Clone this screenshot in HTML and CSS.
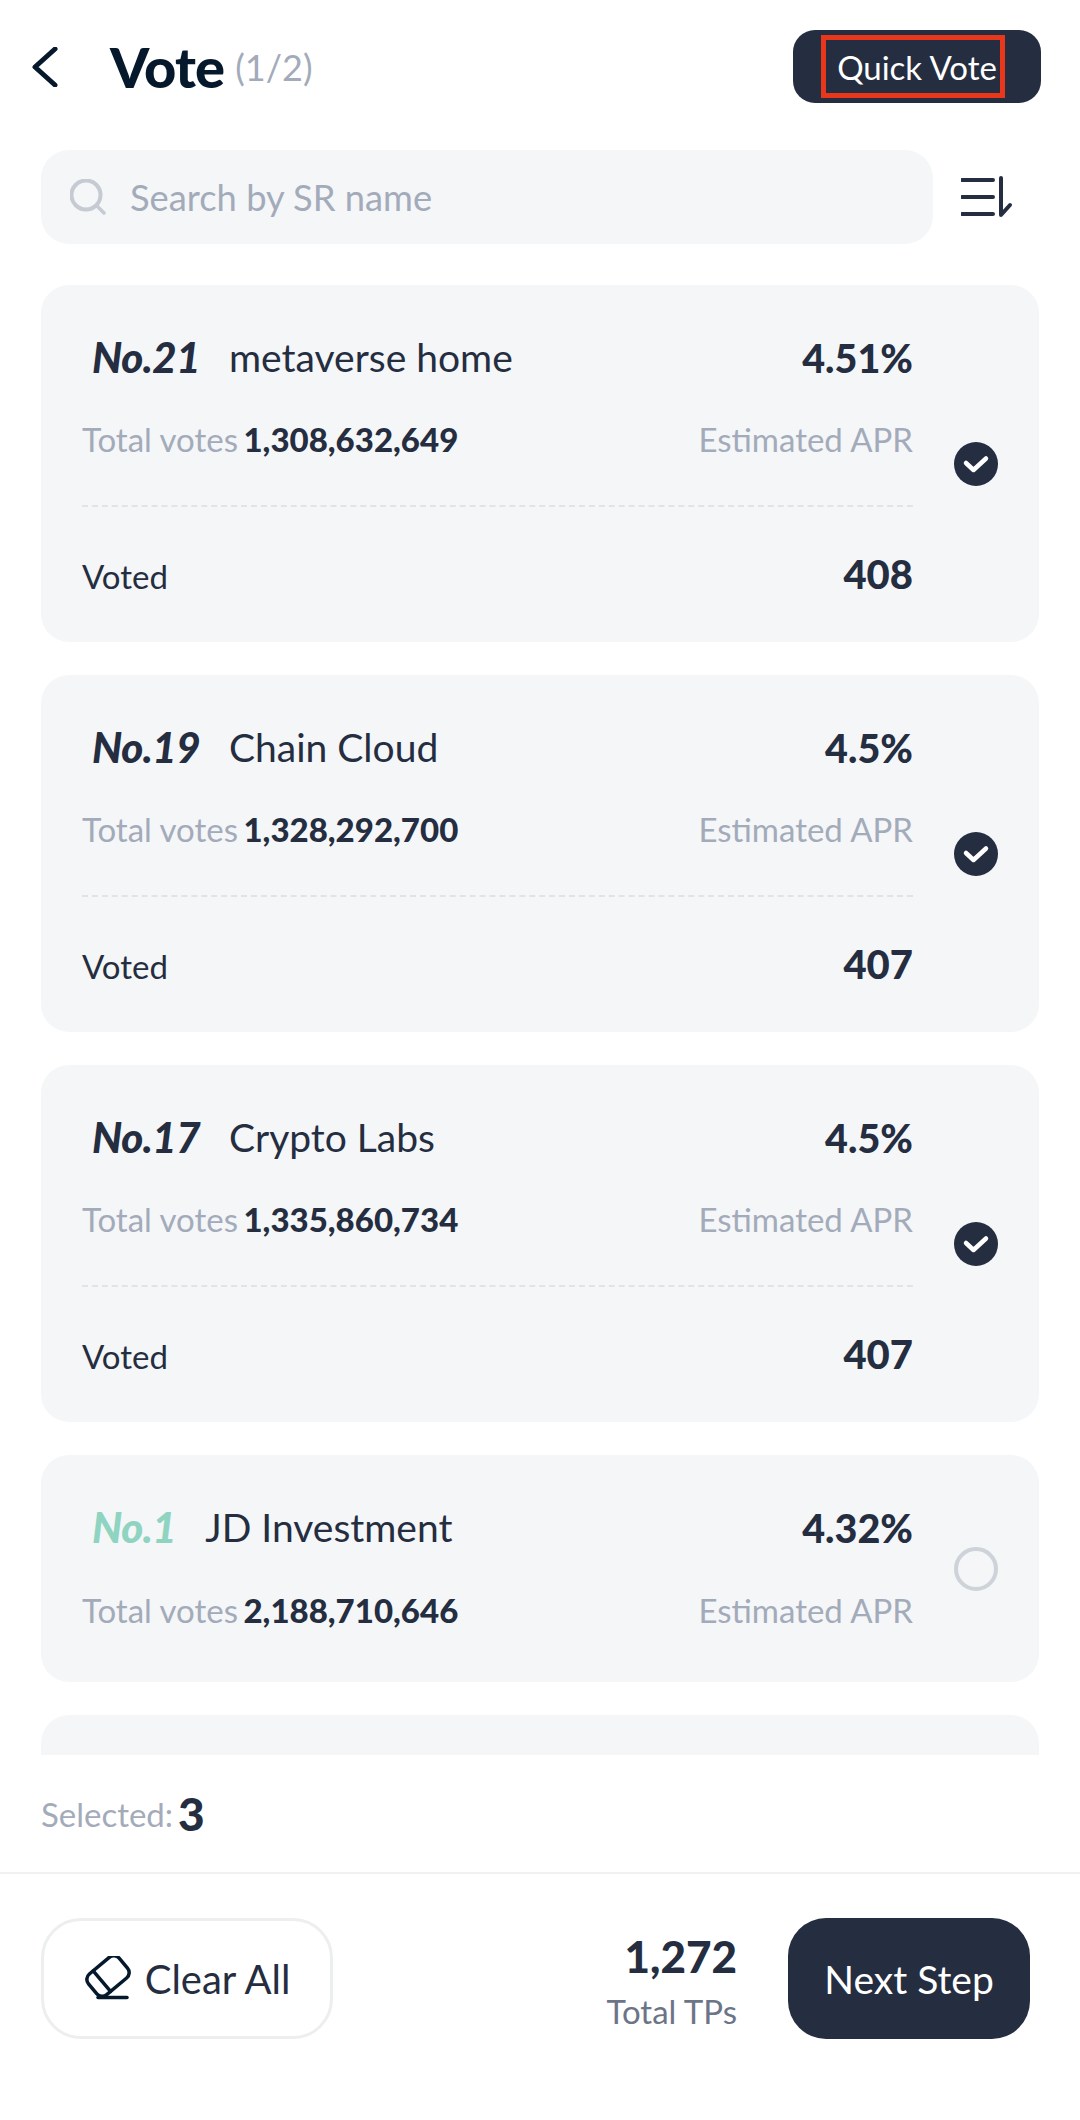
FILE: index.html
```html
<!DOCTYPE html>
<html lang="en">

<head>
    <meta charset="UTF-8">
    <meta name="viewport" content="width=device-width, initial-scale=1.0">
    <title>Vote</title>
    <link rel="stylesheet" href="styles.css">
</head>

<body>
    <div class="page">
        <header class="top-bar">
            <button class="back-btn">
                <svg width="28" height="40" viewBox="0 0 28 40" fill="none">
                    <path d="M25 2 L5 20 L25 38" stroke="#06182c" stroke-width="5" stroke-linecap="round" stroke-linejoin="round"/>
                </svg>
            </button>
            <h1 class="title">Vote</h1>
            <span class="step">(1/2)</span>
            <button class="quick-btn"><span class="quick-label">Quick Vote</span></button>
        </header>

        <div class="search-row">
            <div class="search-box">
                <svg width="36" height="36" viewBox="0 0 36 36" fill="none">
                    <circle cx="16" cy="16" r="14.5" stroke="#c6cbd3" stroke-width="4"/>
                    <path d="M27 27 L34 34" stroke="#c6cbd3" stroke-width="3.5" stroke-linecap="round"/>
                </svg>
                <span class="placeholder">Search by SR name</span>
            </div>
            <button class="sort-btn">
                <svg width="52" height="42" viewBox="0 0 52 42" fill="none">
                    <path d="M1 4 H32 M1 21 H32 M1 38 H32" stroke="#252d40" stroke-width="4" stroke-linecap="round"/>
                    <path d="M40 2 V39 L49 29" stroke="#252d40" stroke-width="4" stroke-linecap="round" stroke-linejoin="round"/>
                </svg>
            </button>
        </div>

        <div class="list">
            <div class="card">
                <div class="card-body">
                    <div class="row name-row">
                        <div class="sr"><span class="rank">No.21</span><span class="sr-name">metaverse home</span></div>
                        <span class="apr">4.51%</span>
                    </div>
                    <div class="row votes-row">
                        <div class="muted">Total votes <b class="votes">1,308,632,649</b></div>
                        <span class="muted">Estimated APR</span>
                    </div>
                    <div class="row voted-row">
                        <span class="voted-label">Voted</span>
                        <span class="voted-num">408</span>
                    </div>
                </div>
                <span class="check on">
                    <svg width="44" height="44" viewBox="0 0 44 44" fill="none"><path d="M12 21 L19.5 28 L32 16.5" stroke="#fff" stroke-width="4.5" stroke-linecap="round" stroke-linejoin="round"/></svg>
                </span>
            </div>

            <div class="card">
                <div class="card-body">
                    <div class="row name-row">
                        <div class="sr"><span class="rank">No.19</span><span class="sr-name">Chain Cloud</span></div>
                        <span class="apr">4.5%</span>
                    </div>
                    <div class="row votes-row">
                        <div class="muted">Total votes <b class="votes">1,328,292,700</b></div>
                        <span class="muted">Estimated APR</span>
                    </div>
                    <div class="row voted-row">
                        <span class="voted-label">Voted</span>
                        <span class="voted-num">407</span>
                    </div>
                </div>
                <span class="check on">
                    <svg width="44" height="44" viewBox="0 0 44 44" fill="none"><path d="M12 21 L19.5 28 L32 16.5" stroke="#fff" stroke-width="4.5" stroke-linecap="round" stroke-linejoin="round"/></svg>
                </span>
            </div>

            <div class="card">
                <div class="card-body">
                    <div class="row name-row">
                        <div class="sr"><span class="rank">No.17</span><span class="sr-name">Crypto Labs</span></div>
                        <span class="apr">4.5%</span>
                    </div>
                    <div class="row votes-row">
                        <div class="muted">Total votes <b class="votes">1,335,860,734</b></div>
                        <span class="muted">Estimated APR</span>
                    </div>
                    <div class="row voted-row">
                        <span class="voted-label">Voted</span>
                        <span class="voted-num">407</span>
                    </div>
                </div>
                <span class="check on">
                    <svg width="44" height="44" viewBox="0 0 44 44" fill="none"><path d="M12 21 L19.5 28 L32 16.5" stroke="#fff" stroke-width="4.5" stroke-linecap="round" stroke-linejoin="round"/></svg>
                </span>
            </div>

            <div class="card short">
                <div class="card-body">
                    <div class="row name-row">
                        <div class="sr"><span class="rank top">No.1</span><span class="sr-name">JD Investment</span></div>
                        <span class="apr">4.32%</span>
                    </div>
                    <div class="row votes-row last">
                        <div class="muted">Total votes <b class="votes">2,188,710,646</b></div>
                        <span class="muted">Estimated APR</span>
                    </div>
                </div>
                <span class="check"></span>
            </div>

            <div class="card peek"></div>
        </div>

        <div class="selected">
            <span class="selected-label">Selected:</span>
            <b class="selected-num">3</b>
        </div>

        <footer class="bottom-bar">
            <button class="clear-btn">
                <svg width="48" height="46" viewBox="0 0 48 46" fill="none" stroke="#06182c" stroke-width="3.5" stroke-linecap="round">
                    <g transform="translate(24 20) rotate(-40)">
                        <rect x="-20" y="-13.5" width="40" height="27" rx="7"/>
                        <path d="M-8 -13.5 V13.5"/>
                    </g>
                    <path d="M14 41.5 H43"/>
                </svg>
                <span>Clear All</span>
            </button>
            <div class="total">
                <b class="total-num">1,272</b>
                <span class="total-label">Total TPs</span>
            </div>
            <button class="next-btn">Next Step</button>
        </footer>
    </div>
</body>

</html>
```

FILE: styles.css
```css
* {
    box-sizing: border-box;
}

body {
    margin: 0;
    background: #fff;
    color: #252d40;
    font-family: Lato, "Open Sans", sans-serif;
}

button {
    font-family: inherit;
    border: none;
    background: none;
    padding: 0;
}

.page {
    width: 1080px;
    height: 2120px;
    display: flex;
    flex-direction: column;
    overflow: hidden;
}

.top-bar {
    height: 150px;
    padding: 30px 39px 47px 30px;
    display: flex;
    align-items: center;
}

.back-btn {
    width: 80px;
    height: 40px;
    text-align: left;
}

.title {
    margin: 0;
    font-size: 56px;
    font-weight: 900;
    letter-spacing: -0.8px;
    color: #06182c;
}

.step {
    margin-left: 11px;
    font-size: 36px;
    color: #a3abba;
}

.quick-btn {
    margin-left: auto;
    width: 248px;
    height: 73px;
    padding-right: 8px;
    border-radius: 22px;
    background: #252d40;
    display: flex;
    align-items: center;
    justify-content: center;
}

.quick-label {
    width: 184px;
    height: 63px;
    padding-left: 8px;
    border: 5px solid #e8371a;
    color: #fff;
    font-size: 33px;
    line-height: 54px;
    text-align: center;
}

.search-row {
    height: 94px;
    padding-left: 41px;
    display: flex;
    align-items: center;
}

.search-box {
    width: 892px;
    height: 94px;
    border-radius: 28px;
    background: #f4f6f8;
    padding-left: 29px;
    display: flex;
    align-items: center;
    gap: 24px;
}

.placeholder {
    font-size: 36.3px;
    color: #a3abba;
}

.sort-btn {
    margin-left: 28px;
    height: 42px;
}

.list {
    height: 1470px;
    margin-top: 41px;
    padding: 0 41px;
    display: flex;
    flex-direction: column;
    gap: 33px;
    overflow: hidden;
    flex: none;
}

.card {
    flex: none;
    height: 357px;
    border-radius: 28px;
    background: #f4f6f8;
    padding: 0 0 0 41px;
    display: flex;
    align-items: center;
}

.card.short {
    height: 227px;
}

.card.peek {
    height: 100px;
}

.card-body {
    width: 831px;
    align-self: flex-start;
}

.row {
    display: flex;
    justify-content: space-between;
    align-items: center;
}

.name-row {
    height: 50px;
    margin-top: 47px;
}

.sr {
    display: flex;
    align-items: center;
}

.rank {
    margin-left: 10px;
    font-size: 42px;
    font-style: italic;
    font-weight: 900;
    letter-spacing: -0.5px;
}

.rank.top {
    color: #8fd3c1;
}

.sr-name {
    margin-left: 29px;
    font-size: 39px;
}

.apr {
    font-size: 39.5px;
    font-weight: 900;
}

.votes-row {
    margin-top: 36px;
    padding-bottom: 45px;
    height: 89px;
    border-bottom: 2px dashed #e0e3e8;
}

.votes-row.last {
    border-bottom: none;
}

.muted {
    font-size: 33px;
    color: #a3abba;
}

.votes {
    margin-left: -3px;
    font-weight: 900;
    color: #252d40;
}

.voted-row {
    margin-top: 43px;
    align-items: baseline;
}

.voted-label {
    font-size: 33px;
}

.voted-num {
    font-size: 40px;
    font-weight: 900;
}

.check {
    margin-left: 41px;
    width: 44px;
    height: 44px;
    border-radius: 50%;
    border: 4px solid #ced2d9;
    display: flex;
    align-items: center;
    justify-content: center;
}

.check.on {
    background: #252d40;
    border: none;
}

.selected {
    height: 119px;
    padding: 0 41px 0;
    display: flex;
    align-items: center;
    gap: 5px;
    border-bottom: 2px solid #f0f1f3;
}

.selected-label {
    font-size: 33px;
    color: #a3abba;
}

.selected-num {
    font-size: 46px;
    font-weight: 900;
}

.bottom-bar {
    padding: 44px 50px 0 41px;
    display: flex;
    align-items: center;
}

.clear-btn {
    width: 292px;
    height: 121px;
    border: 3px solid #eceef0;
    border-radius: 40px;
    color: #252d40;
    font-size: 40px;
    display: flex;
    align-items: center;
    justify-content: center;
    gap: 13px;
}

.total {
    margin-left: auto;
    padding-top: 4px;
    display: flex;
    flex-direction: column;
    align-items: flex-end;
}

.total-num {
    font-size: 44px;
    font-weight: 900;
}

.total-label {
    margin-top: 9px;
    font-size: 33px;
    color: #6b7587;
}

.next-btn {
    margin-left: 51px;
    width: 242px;
    height: 121px;
    border-radius: 38px;
    background: #252d40;
    color: #fff;
    font-size: 39px;
}
```
